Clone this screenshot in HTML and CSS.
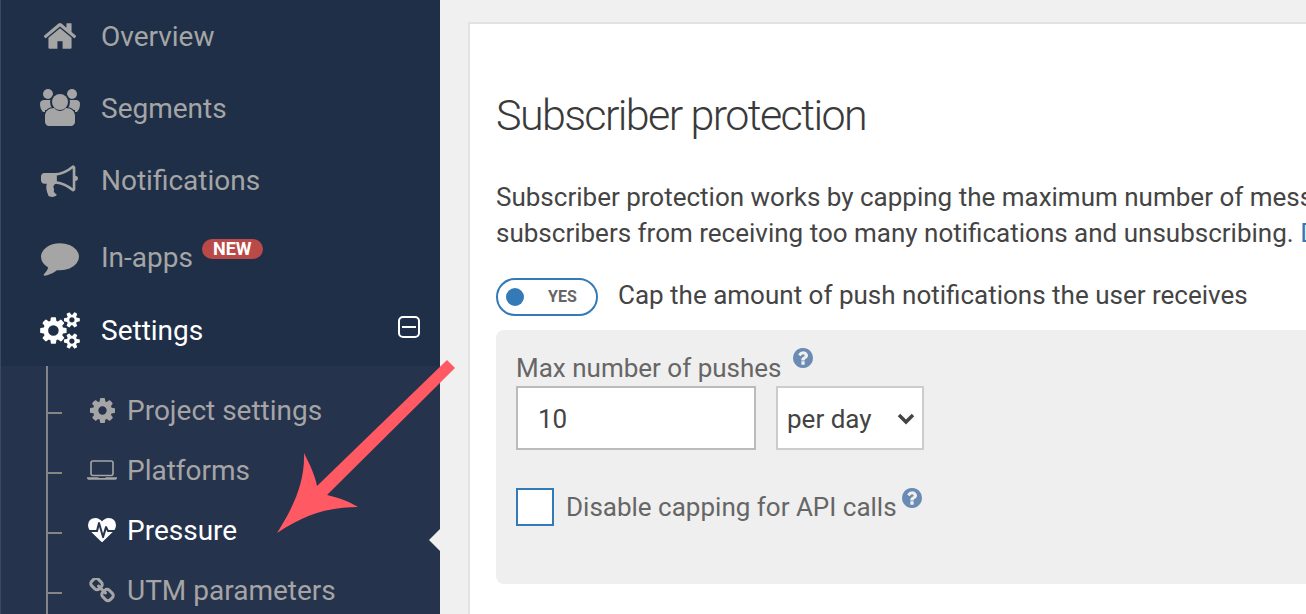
FILE: index.html
```html
<!DOCTYPE html>
<html lang="en">
<head>
<meta charset="utf-8">
<title>Subscriber protection</title>
<link rel="stylesheet" href="styles.css">
</head>
<body>
<div class="page">
  <aside class="sidebar">
    <nav class="nav">
      <a class="nav-item">
        <span class="nav-icon"><svg class="i-home" viewBox="0 0 1664 1792"><path d="M1408 992v480q0 26-19 45t-45 19h-384v-384h-256v384h-384q-26 0-45-19t-19-45v-480q0-1 .5-3t.5-3l575-474 575 474q1 2 1 6zm223-69l-62 74q-8 9-21 11h-3q-13 0-21-7l-692-577-692 577q-12 8-24 7-13-2-21-11l-62-74q-8-10-7-23.500t11-21.500l719-599q32-26 76-26t76 26l244 204v-195q0-14 9-23t23-9h192q14 0 23 9t9 23v408l219 182q10 8 11 21.500t-7 23.500z"/></svg></span>
        <span>Overview</span>
      </a>
      <a class="nav-item">
        <span class="nav-icon"><svg class="i-users" viewBox="0 0 40 38"><circle cx="8" cy="5" r="5"/><circle cx="32" cy="5" r="5"/><path d="M0 15c0-3 2-4 4-4h9v10H5v2H3c-2-2-3-5-3-8zM40 15c0-3-2-4-4-4h-9v10h8v2h2c2-2 3-5 3-8z"/><path class="cut" d="M4 37V27c0-6 5-9 10-9h12c5 0 10 3 10 9v10z"/><circle class="cut" cx="20" cy="13" r="10"/><circle cx="20" cy="13" r="8"/><path d="M5 33v-6c0-5 4-8 9-8 2 2 4 3 6 3s4-1 6-3c5 0 9 3 9 8v6c0 2-2 4-4 4H9c-2 0-4-2-4-4z"/></svg></span>
        <span>Segments</span>
      </a>
      <a class="nav-item">
        <span class="nav-icon"><svg class="i-horn" viewBox="0 128 1792 1536"><path d="M1664 640q53 0 90.500 37.500t37.500 90.500-37.500 90.500-90.500 37.500v384q0 52-38 90t-90 38q-417-347-812-380-58 19-91 66t-31 100.500 40 92.500q-20 33-23 65.500t6 58 33.500 55 48 50 61.500 50.500q-29 58-111.500 83t-168.500 11.500-132-55.500q-7-23-29.500-87.500t-32-94.500-23-89-15-101 3.500-98.500 22-110.500h-122q-66 0-113-47t-47-113v-192q0-66 47-113t113-47h480q435 0 896-384 52 0 90 38t38 90v384zm-128 604v-954q-394 302-768 343v270q377 42 768 341z"/></svg></span>
        <span>Notifications</span>
      </a>
      <a class="nav-item nav-item-tall">
        <span class="nav-icon"><svg class="i-chat" viewBox="0 0 1792 1536"><path d="M1792 640q0 174-120 321.500t-326 233-450 85.500q-70 0-145-8-198 175-460 242-49 14-114 22-17 2-30.500-9t-17.500-29v-1q-3-4-.5-12t2-10 4.500-9.500l6-9 7-8.500 8-9q7-8 31-34.500t34.500-38 31-39.500 32.500-51 27-59 26-76q-157-89-247.500-220t-90.500-281q0-130 71-248.500t191-204.500 286-136.500 348-50.500q244 0 450 85.500t326 233 120 321.500z"/></svg></span>
        <span>In-apps</span>
        <span class="badge">NEW</span>
      </a>
      <a class="nav-item nav-item-active">
        <span class="nav-icon"><svg class="i-cogs" viewBox="0 0 1920 1792"><path d="M896 896q0-106-75-181t-181-75-181 75-75 181 75 181 181 75 181-75 75-181zm768 512q0-52-38-90t-90-38-90 38-38 90q0 53 37.500 90.500t90.500 37.500 90.500-37.500 37.500-90.500zm0-1024q0-52-38-90t-90-38-90 38-38 90q0 53 37.500 90.500t90.500 37.500 90.500-37.500 37.500-90.500zm-384 421v185q0 10-7 19.500t-16 10.500l-155 24q-11 35-32 76 34 48 90 115 7 11 7 20 0 12-7 19-23 30-82.500 89.500t-78.500 59.500q-11 0-21-7l-115-90q-37 19-77 31-11 108-23 155-7 24-30 24h-186q-11 0-20-7.500t-10-17.500l-23-153q-34-10-75-31l-118 89q-7 7-20 7-11 0-21-8-144-133-144-160 0-9 7-19 10-14 41-53t47-61q-23-44-35-82l-152-24q-10-1-17-9.500t-7-19.500v-185q0-10 7-19.500t16-10.500l155-24q11-35 32-76-34-48-90-115-7-11-7-20 0-12 7-20 22-30 82-89t79-59q11 0 21 7l115 90q34-18 77-32 11-108 23-154 7-24 30-24h186q11 0 20 7.500t10 17.500l23 153q34 10 75 31l118-89q8-7 20-7 11 0 21 8 144 133 144 160 0 8-7 19-12 16-42 54t-45 60q23 48 34 82l152 23q10 2 17 10.500t7 19.500zm640 533v140q0 16-149 31-12 27-30 52 51 113 51 138 0 4-4 7-122 71-124 71-8 0-46-47t-52-68q-20 2-30 2t-30-2q-14 21-52 68t-46 47q-2 0-124-71-4-3-4-7 0-25 51-138-18-25-30-52-149-15-149-31v-140q0-16 149-31 13-29 30-52-51-113-51-138 0-4 4-7 4-2 35-20t59-34 30-16q8 0 46 46.500t52 67.500q20-2 30-2t30 2q51-71 92-112l6-2q4 0 124 70 4 3 4 7 0 25-51 138 17 23 30 52 149 15 149 31zm0-1024v140q0 16-149 31-12 27-30 52 51 113 51 138 0 4-4 7-122 71-124 71-8 0-46-47t-52-68q-20 2-30 2t-30-2q-14 21-52 68t-46 47q-2 0-124-71-4-3-4-7 0-25 51-138-18-25-30-52-149-15-149-31v-140q0-16 149-31 13-29 30-52-51-113-51-138 0-4 4-7 4-2 35-20t59-34 30-16q8 0 46 46.500t52 67.500q20-2 30-2t30 2q51-71 92-112l6-2q4 0 124 70 4 3 4 7 0 25-51 138 17 23 30 52 149 15 149 31z"/></svg></span>
        <span>Settings</span>
        <span class="collapse"></span>
      </a>
    </nav>
    <ul class="subnav">
      <li class="sub-item">
        <span class="sub-icon"><svg class="i-cog" viewBox="128 128 1536 1536"><path d="M1152 896q0-106-75-181t-181-75-181 75-75 181 75 181 181 75 181-75 75-181zm512-109v222q0 12-8 23t-20 13l-185 28q-19 54-39 91 35 50 107 138 10 12 10 25t-9 23q-27 37-99 108t-94 71q-12 0-26-9l-138-108q-44 23-91 38-16 136-29 186-7 28-36 28h-222q-14 0-24.500-8.500t-11.500-21.500l-28-184q-49-16-90-37l-141 107q-10 9-25 9-14 0-25-11-126-114-165-168-7-10-7-23 0-12 8-23 15-21 51-66.500t54-70.500q-27-50-41-99l-183-27q-13-2-21-12.500t-8-23.500v-222q0-12 8-23t19-13l186-28q14-46 39-92-40-57-107-138-10-12-10-24 0-10 9-23 26-36 98.500-107.500t94.500-71.500q13 0 26 10l138 107q44-23 91-38 16-136 29-186 7-28 36-28h222q14 0 24.500 8.500t11.500 21.500l28 184q49 16 90 37l142-107q9-9 24-9 13 0 25 10 129 119 165 170 7 8 7 22 0 12-8 23-15 21-51 66.500t-54 70.500q26 50 41 98l183 28q13 2 21 12.500t8 23.500z"/></svg></span>
        <span>Project settings</span>
      </li>
      <li class="sub-item">
        <span class="sub-icon"><svg class="i-laptop" viewBox="0 0 30 20"><rect x="4" y="1" width="22" height="14.500" rx="2" fill="none" stroke="currentColor" stroke-width="1.600"/><path d="M0 17.200h11l1 .8h6l1-.8h11v.8c0 1-1 1.800-2 1.800H2c-1 0-2-.8-2-1.800z"/></svg></span>
        <span>Platforms</span>
      </li>
      <li class="sub-item sub-item-active">
        <span class="sub-icon"><svg class="i-heart" viewBox="0 128 1792 1536"><path d="M1280 1024h305q-5 6-10 10.500t-9 7.500l-3 4-623 600q-18 18-44 18t-44-18l-624-602q-5-2-18-15h371q22 0 39.500-13.500t22.500-34.500l70-281 190 667q6 20 23 33t39 13q21 0 38-13t23-33l146-485 56 112q18 35 57 35zm512-428q0 145-103 300h-369l-111-221q-8-17-25.500-27t-36.500-8q-45 5-56 46l-129 430-196-686q-6-20-23.500-33t-39.500-13-39 13.500-22 34.500l-116 464h-423q-103-155-103-300 0-220 127-344t351-124q62 0 126.500 21.500t120 58 95.500 68.500 76 68q36-36 76-68t95.500-68.500 120-58 126.500-21.500q224 0 351 124t127 344z"/></svg></span>
        <span>Pressure</span>
        <span class="pointer"></span>
      </li>
      <li class="sub-item">
        <span class="sub-icon"><svg class="i-link" viewBox="0 128 1664 1536"><path d="M1456 1216q0-40-28-68l-208-208q-28-28-68-28-42 0-72 32 3 3 19 18.500t21.500 21.500 15 19 13 25.500 3.500 27.500q0 40-28 68t-68 28q-15 0-27.500-3.500t-25.500-13-19-15-21.500-21.500-18.500-19q-33 31-33 73 0 40 28 68l206 207q27 27 68 27 40 0 68-26l147-146q28-28 28-67zm-703-705q0-40-28-68l-206-207q-28-28-68-28-39 0-68 27l-147 146q-28 28-28 67 0 40 28 68l208 208q27 27 68 27 42 0 72-31-3-3-19-18.500t-21.500-21.500-15-19-13-25.500-3.500-27.500q0-40 28-68t68-28q15 0 27.500 3.500t25.500 13 19 15 21.500 21.500 18.500 19q33-31 33-73zm895 705q0 120-85 203l-147 146q-83 83-203 83-121 0-204-85l-206-207q-83-83-83-203 0-123 88-209l-88-88q-86 88-208 88-120 0-204-84l-208-208q-84-84-84-204t85-203l147-146q83-83 203-83 121 0 204 85l206 207q83 83 83 203 0 123-88 209l88 88q86-88 208-88 120 0 204 84l208 208q84 84 84 204z"/></svg></span>
        <span>UTM parameters</span>
      </li>
    </ul>
  </aside>
  <main class="main">
    <section class="card">
      <h1 class="title">Subscriber protection</h1>
      <p class="intro">Subscriber protection works by capping the maximum number of messages a user can get, preventing<br>subscribers from receiving too many notifications and unsubscribing. <a class="link">Details</a></p>
      <div class="toggle-row">
        <span class="toggle"><span class="knob"></span><span class="toggle-text">YES</span></span>
        <span class="toggle-caption">Cap the amount of push notifications the user receives</span>
      </div>
      <div class="panel">
        <div class="label-row">
          <label class="label">Max number of pushes</label>
          <svg class="help help-top" viewBox="128 128 1536 1536"><path d="M1024 1376v-192q0-14-9-23t-23-9h-192q-14 0-23 9t-9 23v192q0 14 9 23t23 9h192q14 0 23-9t9-23zm256-672q0-88-55.500-163t-138.500-116-170-41q-243 0-371 213-15 24 8 42l132 100q7 6 19 6 16 0 25-12 53-68 86-92 34-24 86-24 48 0 85.500 26t37.500 59q0 38-20 61t-68 45q-63 28-115.500 86.500t-52.500 125.500v36q0 14 9 23t23 9h192q14 0 23-9t9-23q0-19 21.500-49.500t54.500-49.500q32-18 49-28.500t46-35 44.500-48 28-60.500 12.500-81zm384 192q0 209-103 385.500t-279.500 279.500-385.500 103-385.500-103-279.500-279.500-103-385.500 103-385.500 279.500-279.500 385.500-103 385.500 103 279.500 279.500 103 385.500z"/></svg>
        </div>
        <div class="field-row">
          <input class="input" type="text" value="10">
          <div class="select-wrap">
            <select class="select"><option>per day</option></select>
            <svg class="chevron" viewBox="0 0 18 12"><path d="M2 2l7 7 7-7" fill="none" stroke="currentColor" stroke-width="3.500"/></svg>
          </div>
        </div>
        <div class="check-row">
          <span class="checkbox"></span>
          <span class="check-label">Disable capping for API calls</span>
          <svg class="help help-check" viewBox="128 128 1536 1536"><path d="M1024 1376v-192q0-14-9-23t-23-9h-192q-14 0-23 9t-9 23v192q0 14 9 23t23 9h192q14 0 23-9t9-23zm256-672q0-88-55.500-163t-138.500-116-170-41q-243 0-371 213-15 24 8 42l132 100q7 6 19 6 16 0 25-12 53-68 86-92 34-24 86-24 48 0 85.500 26t37.500 59q0 38-20 61t-68 45q-63 28-115.500 86.500t-52.500 125.500v36q0 14 9 23t23 9h192q14 0 23-9t9-23q0-19 21.500-49.500t54.500-49.500q32-18 49-28.500t46-35 44.500-48 28-60.500 12.500-81zm384 192q0 209-103 385.500t-279.500 279.500-385.500 103-385.500-103-279.500-279.500-103-385.500 103-385.500 279.500-279.500 385.500-103 385.500 103 279.500 279.500 103 385.500z"/></svg>
        </div>
      </div>
    </section>
  </main>
  <svg class="arrow" viewBox="0 0 1306 614"><path d="M447 360L455 368 327 495C340 498 350 502 358 507 330 507 305 514 277 533 295 505 305 480 304 453 310 465 315 475 317 486z"/></svg>
</div>
</body>
</html>
```

FILE: styles.css
```css
* { box-sizing: border-box; }
html, body { margin: 0; height: 100%; overflow: hidden; }
body { font-family: Roboto, "Liberation Sans", sans-serif; background: #f0f0f0; color: #444; }
.page { position: relative; display: flex; width: 1306px; height: 614px; overflow: hidden; }

.sidebar { flex: none; width: 440px; height: 614px; background: #1f2f47; border-left: 1px solid #3b4a60; color: #a5a5a5; font-size: 28px; display: flex; flex-direction: column; }
svg { fill: currentColor; display: block; }
.nav { display: flex; flex-direction: column; }
.nav-item { display: flex; align-items: center; height: 72px; }
.nav-item-tall { height: 78px; padding-top: 4px; }
.nav-item-active { color: #fff; position: relative; }
.nav-icon { flex: none; width: 100px; padding-left: 39px; display: flex; }
.i-home { width: 34px; height: 36px; margin-left: 3px; }
.i-users { width: 40px; height: 38px; }
.i-users .cut { fill: #1f2f47; }
.i-horn { width: 37px; height: 32px; margin: 1px 0 0 1px; }
.i-chat { width: 38px; height: 33px; margin: 5px 0 0 1px; }
.i-cogs { width: 40px; height: 37px; }
.badge { margin: -16px 0 0 9px; background: #b94a48; color: #fff; font-size: 18px; font-weight: 700; line-height: 20px; height: 20px; padding: 0 11px; border-radius: 10px; }
.collapse { position: absolute; left: 397px; top: 22px; width: 22px; height: 22px; border: 2px solid #fff; border-radius: 5px; display: flex; align-items: center; justify-content: center; }
.collapse::before { content: ""; width: 14px; height: 2px; background: #fff; }

.subnav { list-style: none; margin: 0; padding: 14px 0 0; flex: 1; background: #26334d; position: relative; }
.subnav::before { content: ""; position: absolute; left: 45px; top: 0; bottom: 0; width: 2px; background: #858585; }
.sub-item { position: relative; display: flex; align-items: center; height: 60px; padding-left: 85px; }
.sub-item::before { content: ""; position: absolute; left: 45px; top: 32px; width: 16px; height: 2px; background: #858585; }
.sub-item-active { color: #fff; }
.sub-icon { flex: none; width: 41px; display: flex; justify-content: center; padding-right: 9px; }
.i-cog { width: 25px; height: 25px; }
.i-laptop { width: 30px; height: 20px; }
.i-heart { width: 28px; height: 24px; }
.i-link { width: 26px; height: 25px; }
.pointer { position: absolute; left: 428px; top: 29px; border: 11px solid transparent; border-left: 0; border-right-color: #f0f0f0; }

.main { flex: none; width: 1000px; padding: 22px 0 0 28px; }
.card { width: 1000px; height: 620px; background: #fff; border: 2px solid #e2e2e2; padding: 0 0 0 26px; font-size: 26px; color: #444; overflow: hidden; }
.title { margin: 64px 0 0; font-size: 43px; font-weight: 300; letter-spacing: -1.6px; line-height: 54px; color: #3a3a3a; white-space: nowrap; }
.intro { margin: 37px 0 0; line-height: 36px; white-space: nowrap; }
.link { color: #337ab7; }
.toggle-row { display: flex; align-items: center; gap: 20px; margin-top: 27px; height: 38px; white-space: nowrap; }
.toggle-caption { margin-top: -4px; }
.toggle { flex: none; display: flex; align-items: center; width: 102px; height: 38px; border: 2px solid #337ab7; border-radius: 19px; padding-left: 8px; }
.knob { width: 18px; height: 18px; border-radius: 50%; background: #337ab7; }
.toggle-text { margin: -2px 0 0 24px; font-size: 16px; font-weight: 700; color: #666; }
.panel { margin-top: 14px; height: 254px; background: #efefef; border-radius: 8px; padding: 20px 0 0 20px; color: #666; }
.label-row { display: flex; height: 36px; align-items: flex-end; }
.label { line-height: 36px; }
.help { color: #6a8cb4; width: 20px; height: 20px; }
.help-top { margin: 0 0 18px 11px; }
.field-row { display: flex; gap: 20px; }
.input { width: 240px; height: 64px; border: 2px solid #bbb; background: #fff; padding: 2px 0 0 20px; font: inherit; color: #444; outline: 0; border-radius: 0; }
.select-wrap { position: relative; width: 148px; height: 64px; }
.select { appearance: none; width: 100%; height: 100%; border: 2px solid #ccc; background: #fff; padding: 2px 0 0 9px; font: inherit; color: #444; border-radius: 0; }
.chevron { position: absolute; left: 121px; top: 27px; width: 18px; height: 12px; color: #444; }
.check-row { display: flex; align-items: center; margin-top: 38px; height: 38px; }
.checkbox { flex: none; width: 38px; height: 38px; background: #fff; border: 2px solid #337ab7; }
.check-label { margin-left: 12px; }
.help-check { margin: -18px 0 0 5px; }

.arrow { position: absolute; left: 0; top: 0; width: 1306px; height: 614px; fill: #ff5a63; pointer-events: none; }
```
